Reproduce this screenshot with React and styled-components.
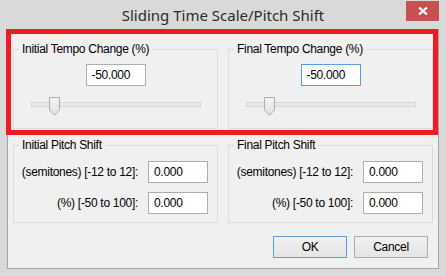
import React from 'react';
import styled, {createGlobalStyle} from 'styled-components';

const GlobalStyle = createGlobalStyle`
  html, body {
    margin: 0;
    padding: 0;
    background: #d9d9d9;
  }
  body {
    font-family: "Liberation Sans", Arial, sans-serif;
    letter-spacing: -0.3px;
    color: #000;
  }
`;

const CloseIcon = () => (
  <svg width="10" height="8" viewBox="0 0 10 8">
    <path d="M1 0.5 L9 7.5 M9 0.5 L1 7.5" stroke="#fff" strokeWidth="2.2" fill="none"/>
  </svg>
);

const ThumbIcon = () => (
  <svg width="11" height="19" viewBox="0 0 11 19">
    <defs>
      <linearGradient id="thumbFill" x1="0" y1="0" x2="0" y2="1">
        <stop offset="0" stopColor="#f3f3f3"/>
        <stop offset="1" stopColor="#e3e3e3"/>
      </linearGradient>
    </defs>
    <path d="M0.5 0.5 H10.5 V13 L5.5 18.3 L0.5 13 Z" fill="url(#thumbFill)" stroke="#acacac"/>
  </svg>
);

const Slider = ({pos}) => (
  <SliderBox>
    <Track/>
    <Thumb style={{left: pos}}>
      <ThumbIcon/>
    </Thumb>
  </SliderBox>
);

const TempoGroup = ({title, value, focused}) => (
  <Group>
    <Legend>{title}</Legend>
    <TempoBody>
      <TextBox $focused={focused}>{value}</TextBox>
      <Slider pos={18}/>
    </TempoBody>
  </Group>
);

const PitchGroup = ({title}) => (
  <Group>
    <Legend>{title}</Legend>
    <PitchBody>
      <FieldLabel>(semitones) [-12 to 12]:</FieldLabel>
      <TextBox>0.000</TextBox>
      <FieldLabel>(%) [-50 to 100]:</FieldLabel>
      <TextBox>0.000</TextBox>
    </PitchBody>
  </Group>
);

export default function App() {
  return (
    <>
      <GlobalStyle/>
      <Window>
        <TitleBar>
          <Title>Sliding Time Scale/Pitch Shift</Title>
          <CloseButton><CloseIcon/></CloseButton>
        </TitleBar>
        <Client>
          <Groups>
            <TempoGroup title="Initial Tempo Change (%)" value="-50.000"/>
            <TempoGroup title="Final Tempo Change (%)" value="-50.000" focused/>
            <PitchGroup title="Initial Pitch Shift"/>
            <PitchGroup title="Final Pitch Shift"/>
          </Groups>
          <ButtonRow>
            <Button $default>OK</Button>
            <Button>Cancel</Button>
          </ButtonRow>
        </Client>
        <Highlight/>
      </Window>
    </>
  );
}

const Window = styled.div`
  position: relative;
  width: 446px;
  height: 276px;
  box-sizing: border-box;
  padding: 0 7px 7px;
  background: #d9d9d9;
  display: flex;
  flex-direction: column;
`;

const TitleBar = styled.div`
  height: 29px;
  display: grid;
  grid-template-columns: 1fr auto 1fr;
  align-items: start;
`;

const Title = styled.div`
  grid-column: 2;
  align-self: center;
  font-family: "Noto Sans", "Open Sans", sans-serif;
  font-size: 15px;
  line-height: 20px;
  letter-spacing: 0;
  color: #2b2b2b;
  white-space: nowrap;
`;

const CloseButton = styled.div`
  grid-column: 3;
  justify-self: end;
  margin-top: 1px;
  width: 33px;
  height: 20px;
  background: #c75050;
  display: flex;
  align-items: center;
  justify-content: center;
`;

const Client = styled.div`
  flex: 1;
  box-sizing: border-box;
  border: 1px solid #a6a6a6;
  background: #f0f0f0;
  padding: 19px 5px 10px;
  display: flex;
  flex-direction: column;
`;

const Groups = styled.div`
  display: grid;
  grid-template-columns: 205px 205px;
  grid-template-rows: 80px 78px;
  column-gap: 10px;
  row-gap: 16px;
`;

const Group = styled.div`
  position: relative;
  box-sizing: border-box;
  border: 1px solid #dcdcdc;
`;

const Legend = styled.div`
  position: absolute;
  top: -9px;
  left: 5px;
  padding: 0 3px;
  background: #f0f0f0;
  font-size: 12px;
  line-height: 16px;
  white-space: nowrap;
`;

const TempoBody = styled.div`
  display: flex;
  flex-direction: column;
  align-items: center;
  padding-top: 14px;
`;

const PitchBody = styled.div`
  display: grid;
  grid-template-columns: 116px 60px;
  column-gap: 10px;
  row-gap: 9px;
  align-items: center;
  padding: 15px 0 0 8px;
`;

const FieldLabel = styled.div`
  justify-self: end;
  font-size: 12px;
  white-space: nowrap;
`;

const TextBox = styled.div`
  width: 60px;
  height: 22px;
  box-sizing: border-box;
  border: 1px solid ${(p) => (p.$focused ? '#569de5' : '#abadb3')};
  background: #fff;
  padding: 0 5px;
  font-size: 12px;
  line-height: 20px;
`;

const SliderBox = styled.div`
  position: relative;
  align-self: stretch;
  height: 19px;
  margin: 11px 16px 0 17px;
`;

const Track = styled.div`
  position: absolute;
  top: 5px;
  left: 0;
  right: 0;
  height: 5px;
  box-sizing: border-box;
  border: 1px solid #d6d6d6;
  background: #e7eaea;
`;

const Thumb = styled.div`
  position: absolute;
  top: 0;
  width: 11px;
  height: 19px;
  display: flex;
`;

const ButtonRow = styled.div`
  margin-top: 13px;
  padding-right: 5px;
  display: flex;
  justify-content: flex-end;
  gap: 7px;
`;

const Button = styled.div`
  width: 74px;
  height: 22px;
  box-sizing: border-box;
  border: 1px solid ${(p) => (p.$default ? '#569de5' : '#adadad')};
  background: linear-gradient(#f0f0f0, #e5e5e5);
  font-size: 12px;
  display: flex;
  align-items: center;
  justify-content: center;
`;

const Highlight = styled.div`
  position: absolute;
  left: 6px;
  top: 29px;
  width: 432px;
  height: 106px;
  box-sizing: border-box;
  border: 5px solid #ed1c24;
  pointer-events: none;
`;
